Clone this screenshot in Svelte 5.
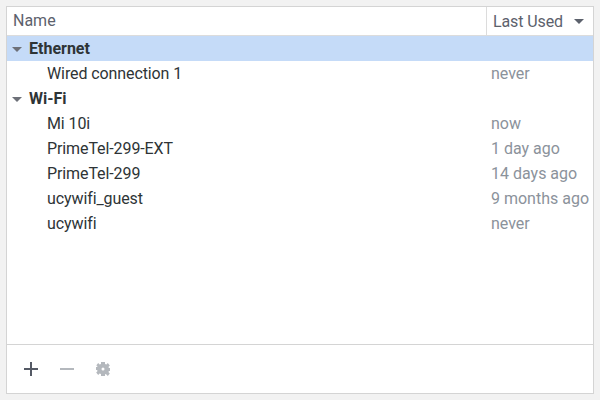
<script>
  const groups = [
    { name: 'Ethernet', selected: true, items: [{ name: 'Wired connection 1', used: 'never' }] },
    {
      name: 'Wi-Fi',
      selected: false,
      items: [
        { name: 'Mi 10i', used: 'now' },
        { name: 'PrimeTel-299-EXT', used: '1 day ago' },
        { name: 'PrimeTel-299', used: '14 days ago' },
        { name: 'ucywifi_guest', used: '9 months ago' },
        { name: 'ucywifi', used: 'never' }
      ]
    }
  ];
</script>

<div class="page">
  <div class="frame">
    <div class="head">
      <div class="col-name">Name</div>
      <div class="col-used">
        <span>Last Used</span>
        <svg class="sort" width="10" height="5" viewBox="0 0 10 5"><path d="M0 0h10L5 5z" fill="#5c616c" /></svg>
      </div>
    </div>
    <div class="list">
      {#each groups as g}
        <div class="row group" class:selected={g.selected}>
          <svg class="arrow" width="10" height="5" viewBox="0 0 10 5"><path d="M0 0h10L5 5z" fill="#6d7078" /></svg>
          <span>{g.name}</span>
        </div>
        {#each g.items as it}
          <div class="row item">
            <span class="name">{it.name}</span>
            <span class="used">{it.used}</span>
          </div>
        {/each}
      {/each}
    </div>
    <div class="toolbar">
      <button aria-label="Add">
        <svg width="14" height="14" viewBox="0 0 14 14"><path d="M0 6h6V0h2v6h6v2H8v6H6V8H0z" fill="#555a65" /></svg>
      </button>
      <button aria-label="Remove">
        <svg width="14" height="14" viewBox="0 0 14 14"><path d="M0 6h14v2H0z" fill="#b4b8bd" /></svg>
      </button>
      <button aria-label="Settings">
        <svg width="14" height="14" viewBox="0 0 14 14"><path fill-rule="evenodd" fill="#b4b8bd" d="M5 0h4v2l1.4.6L11.800 1l2 2.600-1.400 1.500.6.900h1v3h-1l-.6.900 1.400 1.500-2 2.600-1.400-1.600L9 12v2H5v-2l-1.400-.6L2.200 13l-2-2.600 1.400-1.500L1 8H0V5h1l.6-.900L.2 3.600 2.200 1l1.400 1.600L5 2zM7 5.500a1.500 1.500 0 1 0 0 3 1.500 1.500 0 0 0 0-3z" /></svg>
      </button>
    </div>
  </div>
</div>

<style>
  :global(body) {
    margin: 0;
    background: #f2f2f2;
  }
  .page {
    width: 600px;
    height: 400px;
    box-sizing: border-box;
    padding: 6px;
    font-family: Roboto, sans-serif;
    font-size: 16px;
    color: #2e3436;
  }
  .frame {
    box-sizing: border-box;
    width: 588px;
    height: 388px;
    display: flex;
    flex-direction: column;
    background: #fff;
    border: 1px solid #d4d4d4;
  }
  .head {
    flex: none;
    height: 28px;
    display: flex;
    border-bottom: 1px solid #dcdcdc;
    color: #5c616c;
  }
  .col-name {
    flex: 1;
    padding-left: 6px;
    line-height: 27px;
  }
  .col-used {
    width: 107px;
    box-sizing: border-box;
    border-left: 1px solid #dcdcdc;
    padding-left: 6px;
    display: flex;
    align-items: center;
    line-height: 27px;
    letter-spacing: -0.1px;
  }
  .sort {
    margin-left: 11px;
    margin-top: 1px;
  }
  .list {
    flex: 1;
  }
  .row {
    height: 25px;
    display: flex;
    align-items: center;
  }
  .group {
    padding-left: 5px;
    font-weight: 700;
  }
  .group .arrow {
    margin-right: 7px;
    margin-top: 1px;
  }
  .selected {
    background: #c5dbf8;
  }
  .item {
    padding-left: 40px;
  }
  .name {
    flex: 1;
    letter-spacing: -0.1px;
  }
  .used {
    width: 102px;
    color: #8b929b;
    white-space: nowrap;
  }
  .toolbar {
    flex: none;
    height: 48px;
    border-top: 1px solid #d4d4d4;
    display: flex;
    align-items: center;
    padding-left: 17px;
    gap: 22px;
  }
  button {
    all: unset;
    display: flex;
    width: 14px;
    height: 14px;
  }
</style>
